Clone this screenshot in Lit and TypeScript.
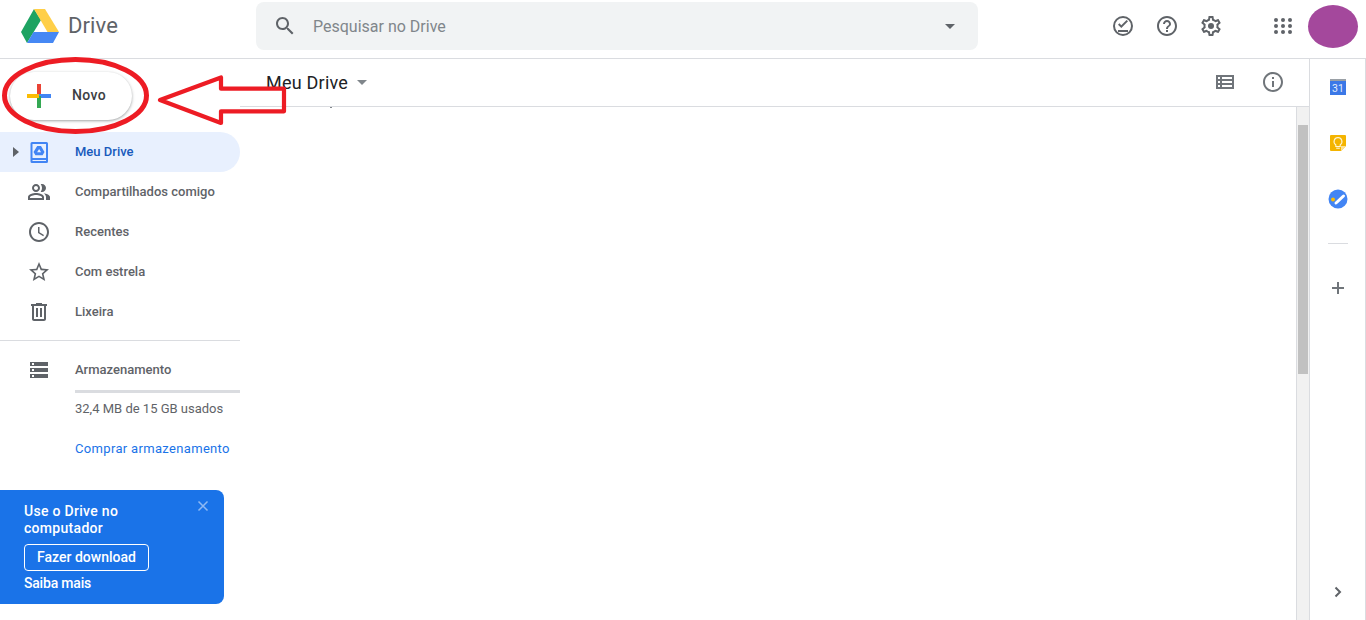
import { LitElement, html, css, svg } from "lit";
import { customElement } from "lit/decorators.js";

const P = {
  search: "M15.5 14h-.79l-.28-.27C15.41 12.59 16 11.11 16 9.5 16 5.91 13.09 3 9.5 3S3 5.91 3 9.5 5.91 16 9.5 16c1.61 0 3.09-.59 4.23-1.57l.27.28v.79l5 4.99L20.49 19l-4.99-5zm-6 0C7.01 14 5 11.99 5 9.5S7.01 5 9.5 5 14 7.01 14 9.5 11.99 14 9.5 14z",
  help: "M11 18h2v-2h-2v2zm1-16C6.48 2 2 6.48 2 12s4.48 10 10 10 10-4.48 10-10S17.52 2 12 2zm0 18c-4.41 0-8-3.59-8-8s3.59-8 8-8 8 3.59 8 8-3.59 8-8 8zm0-14c-2.21 0-4 1.79-4 4h2c0-1.1.9-2 2-2s2 .9 2 2c0 2-3 1.75-3 5h2c0-2.25 3-2.5 3-5 0-2.21-1.79-4-4-4z",
  gear: "M19.43 12.98c.04-.32.07-.64.07-.98 0-.34-.03-.66-.07-.98l2.11-1.65c.19-.15.24-.42.12-.64l-2-3.46c-.09-.16-.26-.25-.44-.25-.06 0-.12.01-.17.03l-2.49 1c-.52-.4-1.08-.73-1.69-.98l-.38-2.65C14.46 2.18 14.25 2 14 2h-4c-.25 0-.46.18-.49.42l-.38 2.65c-.61.25-1.17.59-1.69.98l-2.49-1c-.06-.02-.12-.03-.18-.03-.17 0-.34.09-.43.25l-2 3.46c-.13.22-.07.49.12.64l2.11 1.65c-.04.32-.07.65-.07.98 0 .33.03.66.07.98l-2.11 1.65c-.19.15-.24.42-.12.64l2 3.46c.09.16.26.25.44.25.06 0 .12-.01.17-.03l2.49-1c.52.4 1.08.73 1.69.98l.38 2.65c.03.24.24.42.49.42h4c.25 0 .46-.18.49-.42l.38-2.65c.61-.25 1.17-.59 1.69-.98l2.49 1c.06.02.12.03.18.03.17 0 .34-.09.43-.25l2-3.46c.12-.22.07-.49-.12-.64l-2.11-1.65zm-1.98-1.71c.04.31.05.52.05.73 0 .21-.02.43-.05.73l-.14 1.13.89.7 1.08.84-.7 1.21-1.27-.51-1.04-.42-.9.68c-.43.32-.84.56-1.25.73l-1.06.43-.16 1.13-.2 1.35h-1.4l-.19-1.35-.16-1.13-1.06-.43c-.43-.18-.83-.41-1.23-.71l-.91-.7-1.06.43-1.27.51-.7-1.21 1.08-.84.89-.7-.14-1.13c-.03-.31-.05-.54-.05-.74s.02-.43.05-.73l.14-1.13-.89-.7-1.08-.84.7-1.21 1.27.51 1.04.42.9-.68c.43-.32.84-.56 1.25-.73l1.06-.43.16-1.13.2-1.35h1.39l.19 1.35.16 1.13 1.06.43c.43.18.83.41 1.23.71l.91.7 1.06-.43 1.27-.51.7 1.21-1.07.85-.89.7.14 1.13z",
  people: "M15 8c0-1.42-.5-2.73-1.33-3.76.42-.14.86-.24 1.33-.24 2.21 0 4 1.79 4 4s-1.79 4-4 4c-.43 0-.84-.09-1.23-.21-.03-.01-.06-.02-.1-.03A5.98 5.98 0 0 0 15 8zm1.66 5.13C18.03 14.06 19 15.32 19 17v3h4v-3c0-2.18-3.58-3.47-6.34-3.87zM9 6c-1.1 0-2 .9-2 2s.9 2 2 2 2-.9 2-2-.9-2-2-2m0 9c-2.7 0-5.8 1.29-6 2.01V18h12v-1c-.2-.71-3.3-2-6-2M9 4c2.21 0 4 1.79 4 4s-1.79 4-4 4-4-1.79-4-4 1.79-4 4-4zm0 9c2.67 0 8 1.34 8 4v3H1v-3c0-2.66 5.33-4 8-4z",
  clock: "M11.99 2C6.47 2 2 6.48 2 12s4.47 10 9.99 10C17.52 22 22 17.52 22 12S17.52 2 11.99 2zM12 20c-4.42 0-8-3.58-8-8s3.58-8 8-8 8 3.58 8 8-3.58 8-8 8zm.5-13H11v6l5.25 3.15.75-1.23-4.5-2.67z",
  star: "M22 9.24l-7.19-.62L12 2 9.19 8.63 2 9.24l5.46 4.73L5.82 21 12 17.27 18.18 21l-1.63-7.03L22 9.24zM12 15.4l-3.76 2.27 1-4.28-3.32-2.88 4.38-.38L12 6.1l1.71 4.04 4.38.38-3.32 2.88 1 4.28L12 15.4z",
  trash: "M15 4V3H9v1H4v2h1v13c0 1.1.9 2 2 2h10c1.1 0 2-.9 2-2V6h1V4h-5zm2 15H7V6h10v13zM9 8h2v9H9zm4 0h2v9h-2z",
  storage: "M3 20h18v-4H3v4zm2-3h2v2H5v-2zM3 4v4h18V4H3zm4 3H5V5h2v2zm-4 7h18v-4H3v4zm2-3h2v2H5v-2z",
  list: "M3 5v14h18V5H3zm2 4V7h2v2H5zm4 0V7h10v2H9zm-4 4v-2h2v2H5zm4 0v-2h10v2H9zm-4 4v-2h2v2H5zm4 0v-2h10v2H9z",
  info: "M11 7h2v2h-2zm0 4h2v6h-2zm1-9C6.48 2 2 6.48 2 12s4.48 10 10 10 10-4.48 10-10S17.52 2 12 2zm0 18c-4.41 0-8-3.59-8-8s3.59-8 8-8 8 3.59 8 8-3.59 8-8 8z",
  offline: "M17 18H7v-2h10v2zm-6.700-4L7 10.700l1.400-1.400 1.900 1.900 5.300-5.300L17 7.300 10.300 14z",
};

const icon = (d: string, color = "#5f6368", extra: unknown = "") =>
  html`<svg class="ic" width="24" height="24" viewBox="0 0 24 24" fill="${color}"><path d="${d}"></path>${extra}</svg>`;

@customElement("app-root")
export class AppRoot extends LitElement {
  static styles = css`
    :host { display: block; position: relative; width: 1366px; height: 620px; overflow: hidden; background: #fff;
      font-family: Roboto, "Liberation Sans", sans-serif; color: #5f6368; }
    * { box-sizing: border-box; }
    svg { display: block; flex: none; }
    .top { height: 59px; border-bottom: 1px solid #dadce0; display: flex; align-items: flex-start; }
    .brand { width: 256px; height: 52px; display: flex; align-items: center; padding-left: 20px; gap: 8px; }
    .brand span { font-size: 22px; color: #5f6368; line-height: 54px; letter-spacing: .1px; }
    .search { width: 722px; height: 48px; margin-top: 2px; background: #f1f3f4; border-radius: 8px; display: flex; align-items: center; padding-left: 17px; }
    .search .ph { flex: 1; font-size: 16px; color: #80868b; margin-left: 16px; }
    .search .drop { margin-right: 23px; }
    .tools { display: flex; align-items: center; height: 52px; margin-left: 133px; gap: 20px; }
    .tools2 { display: flex; align-items: center; height: 52px; margin-left: 48px; gap: 13px; }
    .avatar { width: 50px; height: 43px; border-radius: 50%; background: #a4489c; }
    .body { display: flex; height: 561px; }
    .side { width: 240px; flex: none; }
    .new { margin: 13px 0 12px 10px; width: 122px; height: 48px; border-radius: 24px; background: #fff;
      box-shadow: 0 1px 2px 0 rgba(60,64,67,.3), 0 1px 3px 1px rgba(60,64,67,.15); display: flex; align-items: center; padding-left: 17px; }
    .new span { margin-left: 21px; margin-top: -2px; font-size: 14px; font-weight: 500; color: #3c4043; letter-spacing: .4px; }
    .item { height: 40px; display: flex; align-items: center; position: relative; padding-left: 27px; font-size: 13px; font-weight: 500; }
    .item span { margin-left: 24px; margin-top: -2px; }
    .item.on { background: #e8f0fe; border-radius: 0 20px 20px 0; color: #185abc; }
    .tri { position: absolute; left: 13px; top: 15px; width: 0; height: 0; border-left: 6px solid #5f6368; border-top: 5px solid transparent; border-bottom: 5px solid transparent; }
    .sep { height: 1px; background: #dadce0; margin: 8px 0; }
    .storage { height: 41px; display: flex; align-items: center; padding-left: 27px; font-size: 13px; font-weight: 500; }
    .storage span { margin-left: 24px; }
    .bar { height: 3px; margin-left: 75px; background: #dadce0; }
    .used { margin-left: 75px; height: 30px; display: flex; align-items: center; font-size: 13px; }
    .buy { margin: 10px 0 0 75px; height: 30px; display: flex; align-items: center; font-size: 13px; letter-spacing: .33px; color: #1a73e8; }
    .promo { position: relative; margin-top: 27px; width: 224px; height: 114px; background: #1a73e8; border-radius: 0 8px 8px 0; color: #fff; padding: 13px 0 0 24px; font-size: 14px; font-weight: 500; line-height: 17px; }
    .promo .x { position: absolute; right: 15px; top: 10px; }
    .head { letter-spacing: .3px; }
    .dl { margin-top: 7px; width: 125px; height: 27px; border: 1px solid #fff; border-radius: 4px; display: flex; align-items: center; justify-content: center; font-size: 14px; }
    .more { margin-top: 4px; letter-spacing: -.2px; }
    .main { flex: 1; display: flex; flex-direction: column; min-width: 0; }
    .title { height: 48px; border-bottom: 1px solid #dadce0; display: flex; align-items: center; padding-left: 26px; padding-bottom: 1px; color: #202124; font-size: 18px; letter-spacing: .22px; }
    .caret { margin-left: 9px; width: 0; height: 0; border-top: 5px solid #80868b; border-left: 5px solid transparent; border-right: 5px solid transparent; }
    .title .sp { flex: 1; }
    .title .a { margin-right: 24px; }
    .title .b { margin-right: 24px; }
    .content { flex: 1; display: flex; justify-content: flex-end; }
    .track { width: 13px; background: #f1f1f1; border-left: 1px solid #dadce0; padding: 18px 1px 0 1px; }
    .thumb { height: 249px; background: #c1c1c1; }
    .panel { width: 57px; flex: none; border-left: 1px solid #dadce0; border-right: 1px solid #dadce0; display: flex; flex-direction: column; align-items: center; padding-top: 20px; }
    .panel .app { margin-bottom: 40px; }
    .panel .tasks { margin-top: -2px; margin-bottom: 37px; }
    .rule { width: 20px; height: 1px; background: #dadce0; margin-top: -3px; }
    .plus { margin-top: 32px; }
    .sp2 { flex: 1; }
    .chev { margin-bottom: 16px; }
    .notes { position: absolute; inset: 0; pointer-events: none; }
  `;

  render() {
    return html`
      <div class="top">
        <div class="brand">
          <svg width="40" height="36" viewBox="20 8 40 36">
            <polygon points="34,9 21,32 27,43 41,20" fill="#1ea362"></polygon>
            <polygon points="34,9 45,9 59,32 47.5,32" fill="#ffcf48"></polygon>
            <polygon points="27,43 53,43 59,32 33.500,32" fill="#4688f4"></polygon>
          </svg>
          <span>Drive</span>
        </div>
        <div class="search">
          ${icon(P.search)}
          <div class="ph">Pesquisar no Drive</div>
          <svg class="drop" width="10" height="5" viewBox="0 0 10 5" fill="#5f6368"><path d="M0 0h10L5 5z"></path></svg>
        </div>
        <div class="tools">
          <svg width="24" height="24" viewBox="0 0 24 24" fill="#5f6368"><circle cx="12" cy="12" r="9" fill="none" stroke="#5f6368" stroke-width="2"></circle><path d="${P.offline}"></path></svg>
          ${icon(P.help)}
          ${icon(P.gear, "#5f6368", svg`<circle cx="12" cy="12" r="3"></circle>`)}
        </div>
        <div class="tools2">
          <svg width="24" height="24" viewBox="0 0 24 24" fill="#5f6368">
            ${[6, 12, 18].flatMap((y) => [5, 12, 19].map((x) => svg`<circle cx="${x}" cy="${y}" r="2"></circle>`))}
          </svg>
          <div class="avatar"></div>
        </div>
      </div>
      <div class="body">
        <div class="side">
          <div class="new">
            <svg width="24" height="24" viewBox="0 0 24 24">
              <rect x="10" y="0" width="4" height="12" fill="#ea4335"></rect>
              <rect x="12" y="10" width="12" height="4" fill="#4285f4"></rect>
              <rect x="10" y="12" width="4" height="12" fill="#34a853"></rect>
              <rect x="0" y="10" width="12" height="4" fill="#fbbc04"></rect>
            </svg>
            <span>Novo</span>
          </div>
          <div class="item on">
            <i class="tri"></i>
            <svg width="24" height="24" viewBox="0 0 24 24">
              <path fill-rule="evenodd" fill="#4285f4" d="M5 2h14.500A1.500 1.500 0 0 1 21 3.500v18a1.500 1.500 0 0 1-1.500 1.500H5a1.500 1.500 0 0 1-1.500-1.500v-18A1.500 1.500 0 0 1 5 2zM5.500 4v14h13.500V4zM5.500 20v1h13.500v-1z"></path>
              <path fill-rule="evenodd" fill="#4285f4" d="M10.200 6h3.800l3.500 6-1.900 3.300H8.400L6.500 12zM12.100 9l-2 3.300h4z"></path>
            </svg>
            <span>Meu Drive</span>
          </div>
          <div class="item">${icon(P.people)}<span>Compartilhados comigo</span></div>
          <div class="item">${icon(P.clock)}<span>Recentes</span></div>
          <div class="item">${icon(P.star)}<span>Com estrela</span></div>
          <div class="item">${icon(P.trash)}<span>Lixeira</span></div>
          <div class="sep"></div>
          <div class="storage">${icon(P.storage)}<span>Armazenamento</span></div>
          <div class="bar"></div>
          <div class="used">32,4 MB de 15 GB usados</div>
          <div class="buy">Comprar armazenamento</div>
          <div class="promo">
            <svg class="x" width="12" height="12" viewBox="0 0 12 12" stroke="#8fb9f3" stroke-width="1.500" fill="none"><path d="M1.500 1.500l9 9M10.500 1.500l-9 9"></path></svg>
            <div class="head">Use o Drive no<br />computador</div>
            <div class="dl">Fazer download</div>
            <div class="more">Saiba mais</div>
          </div>
        </div>
        <div class="main">
          <div class="title">
            <span>Meu Drive</span><i class="caret"></i><i class="sp"></i>
            <div class="a">${icon(P.list, "#70757a")}</div>
            <div class="b">${icon(P.info, "#70757a")}</div>
          </div>
          <div class="content">
            <div class="track"><div class="thumb"></div></div>
          </div>
        </div>
        <div class="panel">
          <svg class="app" width="16" height="16" viewBox="0 0 16 16">
            <rect x="0" y="0" width="16" height="3" fill="#9aa0a6"></rect>
            <rect x="0" y="2" width="16" height="14" fill="#3b78e7"></rect>
            <text x="8" y="13" font-family="Roboto, sans-serif" font-size="10.500" fill="#e3ecfb" text-anchor="middle">31</text>
          </svg>
          <svg class="app" width="16" height="16" viewBox="0 0 16 16">
            <path d="M1 0h14a1 1 0 0 1 1 1v10l-5 5H1a1 1 0 0 1-1-1V1a1 1 0 0 1 1-1z" fill="#f4b400"></path>
            <path d="M16 11l-5 5v-5z" fill="#fde293"></path>
            <path d="M8 2.500a4 4 0 0 0-2.200 7.300V11.500h4.400V9.800A4 4 0 0 0 8 2.500z" fill="none" stroke="#fff6d8" stroke-width="1.100"></path>
            <path d="M6.200 13.200h3.600" stroke="#fff6d8" stroke-width="1.100"></path>
          </svg>
          <svg class="app tasks" width="20" height="20" viewBox="0 0 20 20">
            <circle cx="10" cy="10" r="9.500" fill="#4285f4"></circle>
            <path d="M8 14l7.500-7" stroke="#fff" stroke-width="3" stroke-linecap="round"></path>
            <circle cx="5" cy="10.500" r="2" fill="#fbbc04"></circle>
          </svg>
          <div class="rule"></div>
          <svg class="plus" width="24" height="24" viewBox="0 0 24 24" fill="#70757a"><path d="M11 6h2v5h5v2h-5v5h-2v-5H6v-2h5z"></path></svg>
          <div class="sp2"></div>
          <svg class="chev" width="24" height="24" viewBox="0 0 24 24" fill="none" stroke="#5f6368" stroke-width="2"><path d="M9.500 7.500L14 12l-4.500 4.500"></path></svg>
        </div>
      </div>
      <svg class="notes" width="1366" height="620" viewBox="0 0 1366 620" fill="none" stroke="#ed1c24">
        <rect x="330" y="107" width="2" height="1" fill="#80868b" stroke="none"></rect>
        <ellipse cx="75.500" cy="95.500" rx="71" ry="36" stroke-width="5"></ellipse>
        <path d="M160 100L221 77.500V88.700H284V111.300H221V123z" stroke-width="4.200" stroke-linejoin="round"></path>
      </svg>
    `;
  }
}
